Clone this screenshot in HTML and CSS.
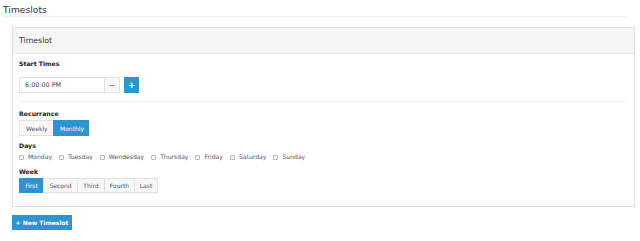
FILE: index.html
```html
<!DOCTYPE html>
<html lang="en">
<head>
  <meta charset="UTF-8" />
  <title>Timeslots</title>
  <link rel="stylesheet" href="styles.css">
</head>
<body>
  <div class="page">
    <h2 class="page-title">Timeslots</h2>

    <div class="panel">
      <div class="panel-heading">Timeslot</div>
      <div class="panel-body">
        <div class="field-label first">Start Times</div>
        <div class="time-row">
          <input class="time-input" type="text" value="6:00:00 PM" />
          <button class="btn btn-light">&minus;</button>
          <button class="btn btn-blue btn-plus">+</button>
        </div>

        <hr class="divider" />

        <div class="field-label">Recurrance</div>
        <div class="btn-group">
          <button class="btn">Weekly</button>
          <button class="btn active">Monthly</button>
        </div>

        <div class="field-label">Days</div>
        <div class="days">
          <label class="day"><span class="check"></span>Monday</label>
          <label class="day"><span class="check"></span>Tuesday</label>
          <label class="day"><span class="check"></span>Wendesday</label>
          <label class="day"><span class="check"></span>Thursday</label>
          <label class="day"><span class="check"></span>Friday</label>
          <label class="day"><span class="check"></span>Saturday</label>
          <label class="day"><span class="check"></span>Sunday</label>
        </div>

        <div class="field-label">Week</div>
        <div class="btn-group weeks">
          <button class="btn active">First</button>
          <button class="btn">Second</button>
          <button class="btn">Third</button>
          <button class="btn">Fourth</button>
          <button class="btn">Last</button>
        </div>
      </div>
    </div>

    <button class="btn btn-blue btn-new">+ New Timeslot</button>
  </div>
</body>
</html>
```

FILE: styles.css
```css
* {
  box-sizing: border-box;
}

body {
  margin: 0;
  font-family: "DejaVu Sans", Verdana, sans-serif;
  color: #333;
  background: white;
}

.page {
  padding: 0 14px 0 3px;
}

.page-title {
  margin: 0 0 10px;
  padding-top: 4px;
  font-size: 9.2px;
  font-weight: normal;
  line-height: 12px;
  color: #333;
  border-bottom: 1px solid #eee;
}

/* Panel */
.panel {
  margin: 0 -9px 0 9px;
  border: 1px solid #ddd;
}

.panel-heading {
  height: 26px;
  padding-left: 6px;
  background-color: #f5f5f5;
  border-bottom: 1px solid #e6e6e6;
  font-size: 7.8px;
  line-height: 25px;
}

.panel-body {
  padding: 0 8px 13px 6px;
}

.field-label {
  margin-top: 5px;
  font-size: 6.2px;
  font-weight: bold;
  line-height: 10px;
  color: #222;
}

.field-label.first {
  margin-top: 5px;
  margin-bottom: 8px;
}

.time-row {
  display: flex;
  height: 16px;
}

.time-input {
  width: 86px;
  height: 16px;
  margin: 0;
  padding: 0 0 0 5px;
  border: 1px solid #ddd;
  font-family: inherit;
  font-size: 6.4px;
  color: #444;
  outline: none;
}

.btn {
  margin: 0;
  padding: 0 6px;
  height: 16px;
  border: 1px solid #e2e2e2;
  background-color: #f7f7f7;
  font-family: inherit;
  font-size: 6px;
  color: #555;
  cursor: pointer;
}

.btn-light {
  width: 15px;
  padding: 0;
  border-left: none;
  font-size: 9px;
  color: #777;
}

.btn-blue {
  background-color: #2f93d0;
  border-color: #2f93d0;
  color: white;
}

.btn-plus {
  width: 15px;
  margin-left: 4px;
  padding: 0;
  font-size: 9px;
  font-weight: bold;
}

.divider {
  margin: 8px 0 0;
  border: none;
  border-top: 1px solid #eee;
}

.divider + .field-label {
  margin-top: 7px;
}

.btn-group {
  display: flex;
  margin-top: 1px;
}

.btn-group .btn {
  margin-left: -1px;
}

.btn-group .btn:first-child {
  margin-left: 0;
}

.btn-group .btn.active {
  background-color: #2f93d0;
  border-color: #2f93d0;
  color: white;
}

.btn-group .btn:nth-child(1) { width: 35px; }
.btn-group .btn:nth-child(2) { width: 36px; }

.weeks .btn {
  height: 15px;
  padding: 0;
}

.weeks .btn:nth-child(1) { width: 25px; }
.weeks .btn:nth-child(2) { width: 35px; }
.weeks .btn:nth-child(3) { width: 28px; }
.weeks .btn:nth-child(4) { width: 31px; }
.weeks .btn:nth-child(5) { width: 24px; }

/* Days */
.days {
  display: flex;
  gap: 7px;
  height: 10px;
  margin-top: 1px;
  font-size: 6.1px;
  line-height: 10px;
  color: #555;
}

.day {
  display: flex;
  align-items: center;
}

.check {
  width: 5px;
  height: 5px;
  margin-right: 4px;
  border: 1px solid #bbb;
  border-radius: 1px;
  background-color: #f4f4f4;
}

.btn-new {
  margin: 8px 0 0 9px;
  width: 60px;
  height: 15px;
  padding: 0;
  font-weight: bold;
  font-size: 6px;
}
```
